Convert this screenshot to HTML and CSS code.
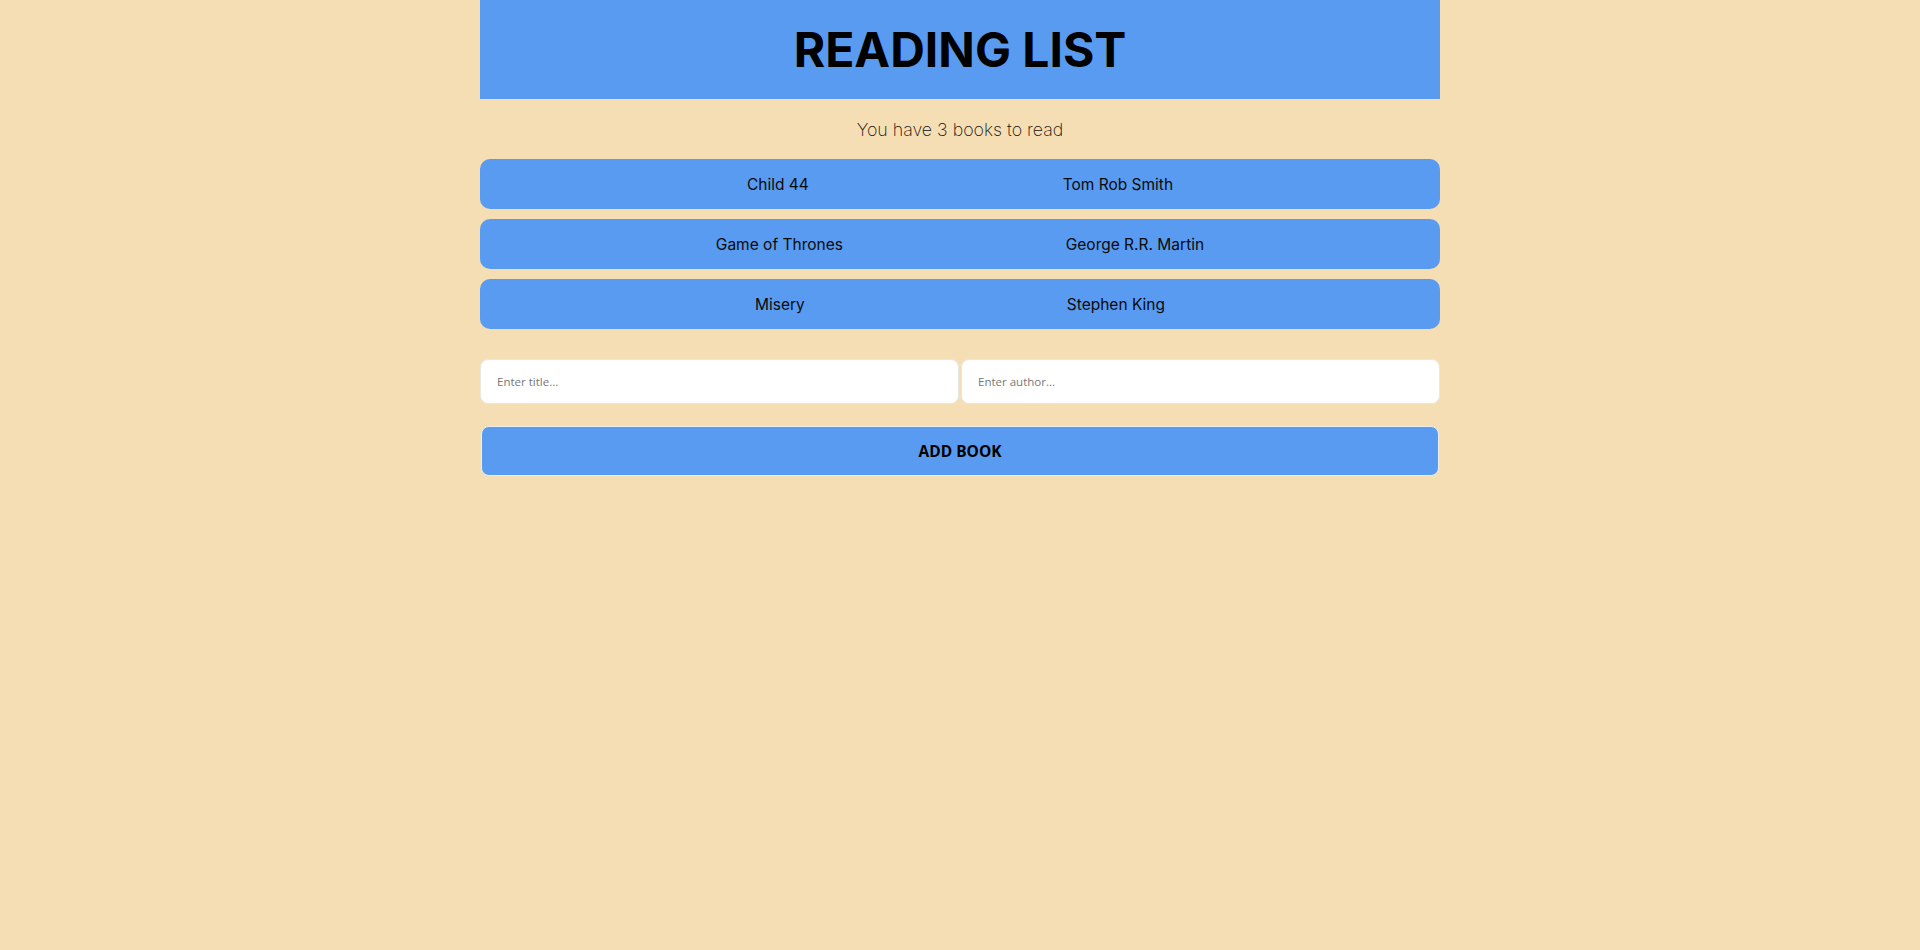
FILE: index.html
```html
<!DOCTYPE html>
<html lang="en">
<head>
<meta charset="utf-8">
<title>Reading List</title>
<link rel="stylesheet" href="styles.css">
</head>
<body>
<div class="app">
  <header class="navbar">
    <h1>READING LIST</h1>
  </header>
  <p class="count">You have 3 books to read</p>
  <ul class="book-list">
    <li class="book"><span class="title">Child 44</span><span class="author">Tom Rob Smith</span></li>
    <li class="book"><span class="title">Game of Thrones</span><span class="author">George R.R. Martin</span></li>
    <li class="book"><span class="title">Misery</span><span class="author">Stephen King</span></li>
  </ul>
  <form class="book-form">
    <div class="fields">
      <input type="text" placeholder="Enter title...">
      <input type="text" placeholder="Enter author...">
    </div>
    <button type="button" class="add-btn">ADD BOOK</button>
  </form>
</div>
</body>
</html>
```
FILE: styles.css
```css
html, body {
  margin: 0;
  padding: 0;
  background: #f5deb3;
  font-family: Inter, "Noto Sans", sans-serif;
  min-height: 100%;
}

.app {
  width: 960px;
  margin: 0 auto;
}

.navbar {
  background: #599bf0;
  height: 99px;
  display: flex;
  align-items: center;
  justify-content: center;
}

.navbar h1 {
  margin: 0;
  font-size: 48px;
  font-weight: 700;
  color: #000;
}

.count {
  margin: 0;
  padding: 19px 0 17px;
  line-height: 24px;
  text-align: center;
  font-size: 17.8px;
  font-weight: 200;
  color: #111;
}

.book-list {
  list-style: none;
  margin: 0;
  padding: 0;
}

.book {
  background: #599bf0;
  height: 50px;
  border-radius: 10px;
  margin-bottom: 10px;
  padding: 0 13px;
  display: flex;
  align-items: center;
  justify-content: space-evenly;
  font-size: 15.5px;
  color: #0a0a0a;
}

.book-form {
  margin-top: 30px;
}

.fields {
  display: flex;
  gap: 2px;
}

.fields input {
  flex: 1;
  box-sizing: border-box;
  height: 45px;
  min-width: 0;
  background: #fff;
  border: 1px solid #e9e7e4;
  border-radius: 8px;
  padding: 0 16px;
  font-family: "Open Sans", sans-serif;
  font-size: 11.5px;
  outline: none;
}

.fields input::placeholder {
  color: #777;
}

.add-btn {
  display: block;
  box-sizing: border-box;
  width: 958px;
  height: 50px;
  margin: 22px auto 0;
  background: #599bf0;
  border: 1px solid #eee;
  border-radius: 8px;
  font-family: "Open Sans", sans-serif;
  font-size: 15.5px;
  font-weight: 700;
  color: #000;
}
```
